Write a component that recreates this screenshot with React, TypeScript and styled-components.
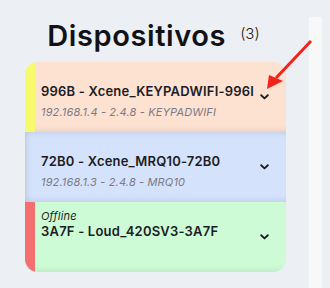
import React from "react";
import styled, { createGlobalStyle } from "styled-components";

const Global = createGlobalStyle`
  html, body { margin: 0; padding: 0; background: #eceff4; }
  body { font-family: Inter, "Noto Sans", sans-serif; color: #1c1c22; }
  #root { min-height: 288px; }
`;

const Page = styled.div`
  position: relative;
  display: flex;
  align-items: stretch;
  width: 330px;
  height: 288px;
  overflow: hidden;
`;

const Main = styled.main`
  width: 261px;
  margin-left: 25px;
  display: flex;
  flex-direction: column;
`;

const Header = styled.header`
  height: 62px;
  display: flex;
  justify-content: center;
  align-items: baseline;
  gap: 14px;
  box-sizing: border-box;
  padding-top: 21px;
  padding-right: 4px;
`;

const Title = styled.h1`
  margin: 0;
  font-size: 29px;
  line-height: 30px;
  font-weight: 600;
  letter-spacing: 0.6px;
  color: #121216;
`;

const Count = styled.span`
  font-size: 15px;
  font-weight: 300;
  color: #222;
  transform: translateY(-7px);
`;

const List = styled.div`
  border-radius: 13px;
  overflow: hidden;
  display: flex;
  flex-direction: column;
`;

const Card = styled.div<{ $bg: string; $inset?: boolean }>`
  display: flex;
  height: 70px;
  background: ${(p) => p.$bg};
  box-shadow: inset 0 -5px 6px -4px rgba(0, 0, 0, 0.1)
    ${(p) => (p.$inset ? ", inset 5px 4px 6px -4px rgba(0,0,0,0.12)" : "")};
`;

const Bar = styled.div<{ $color: string }>`
  width: 10px;
  flex: none;
  background: ${(p) => p.$color};
`;

const Body = styled.div`
  flex: 1;
  min-width: 0;
  padding: 7px 0 0 6px;
  display: flex;
  flex-direction: column;
`;

const Status = styled.div`
  height: 14px;
  font-size: 11px;
  line-height: 14px;
  font-style: italic;
  color: #222;
  letter-spacing: 0.2px;
`;

const Name = styled.div`
  font-size: 13px;
  line-height: 17px;
  font-weight: 600;
  letter-spacing: 0.2px;
  color: #1c1c24;
  white-space: nowrap;
`;

const Meta = styled.div`
  margin-top: 5px;
  font-size: 11px;
  line-height: 14px;
  font-style: italic;
  letter-spacing: 0.15px;
  color: #7b7b86;
  white-space: nowrap;
`;

const Toggle = styled.div`
  width: 26px;
  flex: none;
  display: flex;
  align-items: center;
  justify-content: flex-start;
`;

const Side = styled.aside`
  width: 13px;
  margin-left: 23px;
  margin-top: 17px;
  background: #f8f8f8;
`;

const Overlay = styled.svg`
  position: absolute;
  left: 0;
  top: 0;
  pointer-events: none;
`;

const Chevron = () => (
  <svg width="9" height="6" viewBox="0 0 9 6">
    <path d="M1.2 1.2 L4.5 4.4 L7.8 1.2" fill="none" stroke="#1e1e24" strokeWidth="1.9" strokeLinecap="round" strokeLinejoin="round" />
  </svg>
);

type Device = { status?: string; name: string; meta?: string; bg: string; bar: string; inset?: boolean };

const devices: Device[] = [
  { name: "996B - Xcene_KEYPADWIFI-996I", meta: "192.168.1.4 - 2.4.8 - KEYPADWIFI", bg: "#fde1d1", bar: "#f7fa6c" },
  { name: "72B0 - Xcene_MRQ10-72B0", meta: "192.168.1.3 - 2.4.8 - MRQ10", bg: "#d5e2fb", bar: "transparent", inset: true },
  { status: "Offline", name: "3A7F - Loud_420SV3-3A7F", bg: "#cdfbd6", bar: "#f47070" },
];

export default function App() {
  return (
    <Page>
      <Global />
      <Main>
        <Header>
          <Title>Dispositivos</Title>
          <Count>(3)</Count>
        </Header>
        <List>
          {devices.map((d) => (
            <Card key={d.name} $bg={d.bg} $inset={d.inset}>
              <Bar $color={d.bar} />
              <Body>
                <Status>{d.status}</Status>
                <Name>{d.name}</Name>
                {d.meta && <Meta>{d.meta}</Meta>}
              </Body>
              <Toggle>
                <Chevron />
              </Toggle>
            </Card>
          ))}
        </List>
      </Main>
      <Side />
      <Overlay width="330" height="288" viewBox="0 0 330 288">
        <line x1="311" y1="41" x2="276" y2="78" stroke="#f2231b" strokeWidth="3" />
        <polygon points="267,89 269,75 283,81" fill="#f2231b" />
      </Overlay>
    </Page>
  );
}
